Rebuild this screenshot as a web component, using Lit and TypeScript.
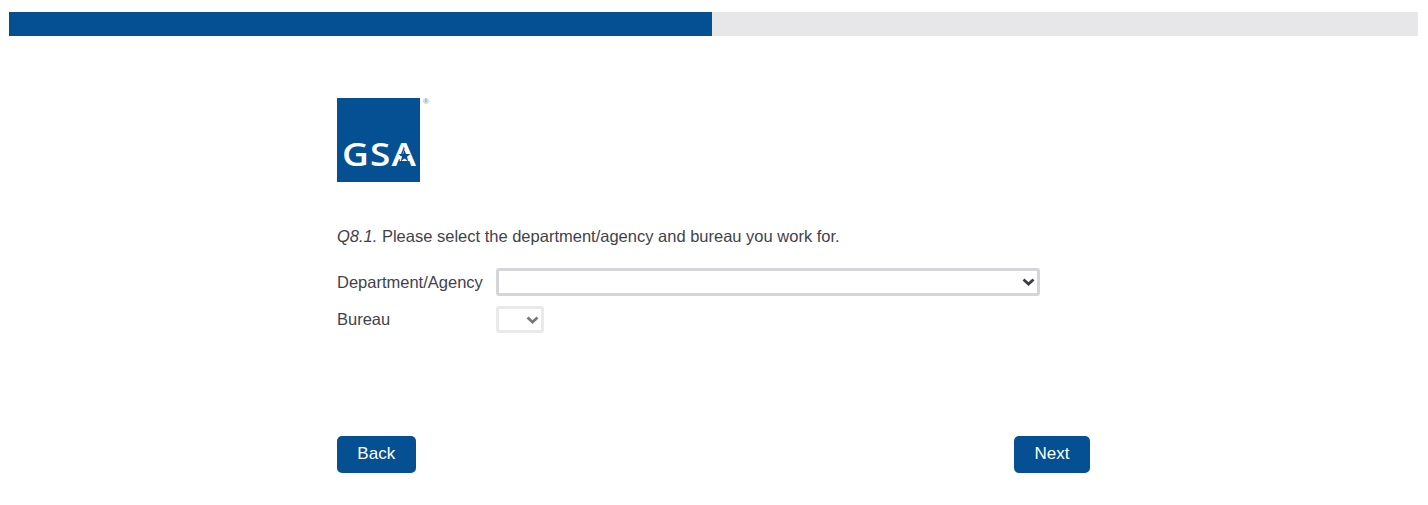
import {LitElement, html, css, svg} from 'lit';
import {customElement} from 'lit/decorators.js';

const chevron = svg`<path d="M1.5 1.5 L6.5 6 L11.5 1.5" fill="none" stroke="currentColor" stroke-width="2.8" />`;

@customElement('app-root')
export class AppRoot extends LitElement {
  static styles = css`
    :host {
      display: block;
      height: 505px;
      background: #fff;
      color: #42424c;
      font-family: 'Liberation Sans', Arial, sans-serif;
      font-size: 16.5px;
      overflow: hidden;
    }

    .progress {
      display: flex;
      height: 24px;
      margin: 12px 10px 0 9px;
      background: #e7e7e9;
    }

    .progress-fill {
      width: 703px;
      background: #045092;
    }

    .content {
      width: 753px;
      margin: 62px 0 0 337px;
    }

    .logo-wrap {
      display: flex;
      align-items: flex-start;
    }

    .logo {
      position: relative;
      box-sizing: border-box;
      width: 83px;
      height: 84px;
      background: #045092;
      color: #fff;
      font-family: 'Open Sans', 'Liberation Sans', sans-serif;
      font-size: 33px;
      font-weight: 600;
      line-height: 1;
      padding: 39px 0 0 5px;
      white-space: nowrap;
    }

    .logo-text {
      display: inline-block;
      letter-spacing: 1px;
      transform: scaleX(1.12);
      transform-origin: left;
    }

    .logo-star {
      position: absolute;
      left: 57px;
      top: 47px;
      width: 23px;
      height: 20px;
    }

    .reg {
      margin: 0 0 0 3px;
      font-size: 8px;
      font-weight: 700;
      line-height: 8px;
      color: #6f9fcf;
    }

    .question {
      margin: 44px 0 0;
      line-height: 20px;
    }

    .fields {
      display: grid;
      grid-template-columns: 159px 544px;
      row-gap: 10px;
      margin-top: 22px;
      align-items: center;
    }

    .select-wrap {
      position: relative;
      display: flex;
    }

    .select-wrap.small {
      width: 48px;
    }

    select {
      appearance: none;
      box-sizing: border-box;
      width: 100%;
      height: 28px;
      border: 3px solid #d5d5d9;
      border-radius: 3px;
      background: #fff;
      font: inherit;
    }

    select:disabled {
      height: 27px;
      border-color: #e2e2e4;
    }

    .chevron {
      position: absolute;
      right: 5px;
      top: 10px;
      width: 13px;
      height: 8px;
      color: #3d3d47;
      pointer-events: none;
    }

    .small .chevron {
      color: #77777d;
    }

    .actions {
      display: flex;
      justify-content: space-between;
      margin-top: 103px;
    }

    button {
      box-sizing: border-box;
      height: 37px;
      padding: 0 0 1px;
      border: none;
      border-radius: 5px;
      background: #045092;
      color: #fff;
      font: inherit;
      font-size: 17px;
    }

    .back {
      width: 78.5px;
    }

    .next {
      width: 76px;
    }
  `;

  render() {
    return html`
      <div class="progress"><div class="progress-fill"></div></div>
      <div class="content">
        <div class="logo-wrap">
          <div class="logo">
            <span class="logo-text">GSA</span>
            <svg class="logo-star" viewBox="0 0 23 20">
              <path fill="#fff" d="M11.5 2 L5.5 16 L17.5 16 Z" />
              <path
                fill="#045092"
                d="M10.5 5 L12 9 L16.5 9 L13 11.8 L14.3 16.5 L10.5 13.6 L6.7 16.5 L8 11.8 L4.5 9 L9 9 Z"
              />
            </svg>
          </div>
          <span class="reg">®</span>
        </div>
        <p class="question">
          <em>Q8.1.</em> Please select the department/agency and bureau you work
          for.
        </p>
        <div class="fields">
          <label>Department/Agency</label>
          <div class="select-wrap">
            <select aria-label="Department/Agency"></select>
            <svg class="chevron" viewBox="0 0 13 8">${chevron}</svg>
          </div>
          <label>Bureau</label>
          <div class="select-wrap small">
            <select aria-label="Bureau" disabled></select>
            <svg class="chevron" viewBox="0 0 13 8">${chevron}</svg>
          </div>
        </div>
        <div class="actions">
          <button class="back">Back</button>
          <button class="next">Next</button>
        </div>
      </div>
    `;
  }
}
